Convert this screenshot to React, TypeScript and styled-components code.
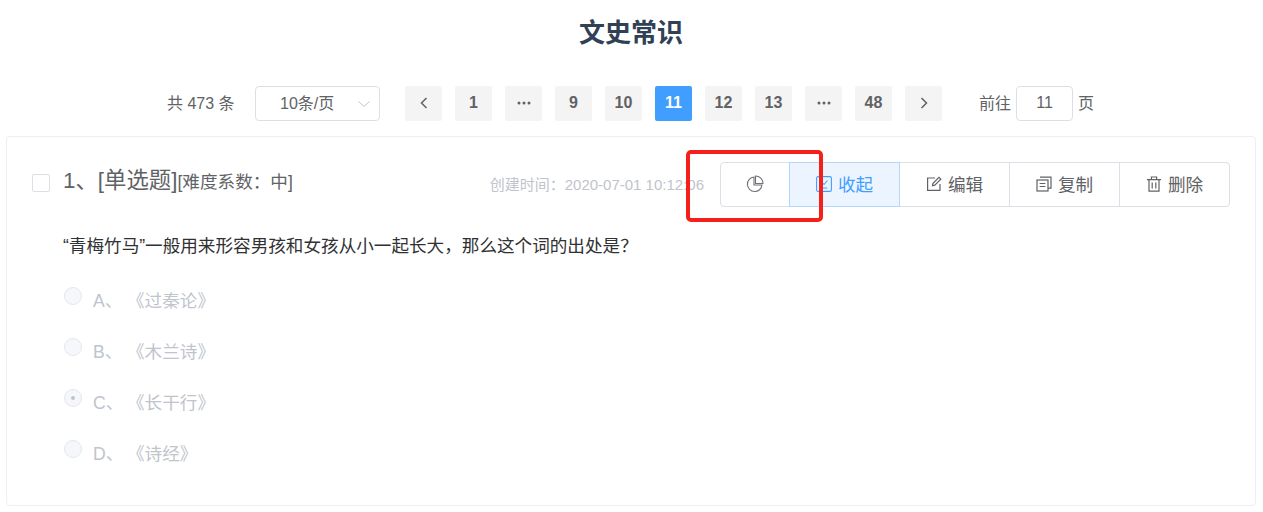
import React from "react";
import styled, { createGlobalStyle } from "styled-components";

const GlobalStyle = createGlobalStyle`
  html, body {
    margin: 0;
    padding: 0;
    background: #fff;
    font-family: "Liberation Sans", "Noto Sans CJK SC", sans-serif;
  }
  * {
    box-sizing: border-box;
  }
`;

const pages = ["1", "...", "9", "10", "11", "12", "13", "...", "48"];
const options = [
  { label: "A、", text: "《过秦论》", checked: false },
  { label: "B、", text: "《木兰诗》", checked: false },
  { label: "C、", text: "《长干行》", checked: true },
  { label: "D、", text: "《诗经》", checked: false },
];

const PieIcon = () => (
  <svg width="18" height="18" viewBox="0 0 18 18" fill="none" stroke="#707276" strokeWidth="1.1">
    <path d="M8 2a7.300 7.300 0 1 0 8 8H8z" />
    <path d="M9.500 1a7.500 7.500 0 0 1 7.500 7.500H9.500z" />
  </svg>
);

const FoldIcon = () => (
  <svg width="16" height="16" viewBox="0 0 16 16" fill="none" stroke="currentColor" strokeWidth="1.1">
    <rect x="0.6" y="0.6" width="14.800" height="14.800" rx="1.500" />
    <path d="M4.500 4.500l3.500 4 3.500-4M4.500 12h7" />
  </svg>
);

const EditIcon = () => (
  <svg width="16" height="16" viewBox="0 0 16 16" fill="none" stroke="currentColor" strokeWidth="1.2">
    <path d="M14 8v6.400H1.600V2H9" />
    <path d="M6.500 9.600l.5-2.400L13 1.400l1.800 1.800-6 5.900z" />
  </svg>
);

const CopyIcon = () => (
  <svg width="16" height="16" viewBox="0 0 16 16" fill="none" stroke="currentColor" strokeWidth="1.2">
    <rect x="1" y="4" width="11" height="11" />
    <path d="M4 1.200h11v11h-3M3.600 7.500h5.800M3.600 10.500h5.800" />
  </svg>
);

const TrashIcon = () => (
  <svg width="16" height="16" viewBox="0 0 16 16" fill="none" stroke="currentColor" strokeWidth="1.2">
    <path d="M1 3.600h14M3 3.600v11.600h10V3.600M5.400 3.600V1h5.200v2.600M6.200 6.400v6M9.800 6.400v6" />
  </svg>
);

const App = () => {
  return (
    <Page>
      <GlobalStyle />
      <Title>文史常识</Title>
      <Pagination>
        <Total>共 473 条</Total>
        <SizeSelect>
          <Raised>10条/页</Raised>
          <svg width="14" height="14" viewBox="0 0 14 14" fill="none" stroke="#c0c4cc" strokeWidth="1">
            <path d="M1.500 4.500L7 9.500l5.500-5" />
          </svg>
        </SizeSelect>
        <Pager>
          <PageButton>
            <svg width="14" height="14" viewBox="0 0 14 14" fill="none" stroke="#606266" strokeWidth="1.500">
              <path d="M9.500 2L4.500 7l5 5" />
            </svg>
          </PageButton>
          {pages.map((page, index) => (
            <PageButton key={index} $active={page === "11"}>
              {page === "..." ? (
                <svg width="14" height="4" viewBox="0 0 14 4" fill="#606266">
                  <circle cx="2" cy="2" r="1.500" />
                  <circle cx="7" cy="2" r="1.500" />
                  <circle cx="12" cy="2" r="1.500" />
                </svg>
              ) : (
                page
              )}
            </PageButton>
          ))}
          <PageButton>
            <svg width="14" height="14" viewBox="0 0 14 14" fill="none" stroke="#606266" strokeWidth="1.500">
              <path d="M4.500 2l5 5-5 5" />
            </svg>
          </PageButton>
        </Pager>
        <Jumper>
          <Raised>前往</Raised>
          <JumpInput>11</JumpInput>
          <Raised>页</Raised>
        </Jumper>
      </Pagination>
      <Card>
        <CardHeader>
          <Checkbox />
          <Heading>
            1、[单选题]<Difficulty>[难度系数：中]</Difficulty>
          </Heading>
          <CreatedAt>创建时间：2020-07-01 10:12:06</CreatedAt>
          <ActionGroup>
            <ActionButton $width={70}>
              <PieIcon />
            </ActionButton>
            <ActionButton $width={111} $active>
              <FoldIcon />
              收起
            </ActionButton>
            <ActionButton $width={111}>
              <EditIcon />
              编辑
            </ActionButton>
            <ActionButton $width={111}>
              <CopyIcon />
              复制
            </ActionButton>
            <ActionButton $width={111}>
              <TrashIcon />
              删除
            </ActionButton>
            <Highlight />
          </ActionGroup>
        </CardHeader>
        <Question>“青梅竹马”一般用来形容男孩和女孩从小一起长大，那么这个词的出处是？</Question>
        <OptionList>
          {options.map((option) => (
            <Option key={option.label}>
              <Radio $checked={option.checked} />
              <OptionLabel>{option.label}</OptionLabel>
              <OptionText>{option.text}</OptionText>
            </Option>
          ))}
        </OptionList>
      </Card>
    </Page>
  );
};

export default App;

const Page = styled.div`
  width: 1263px;
  height: 512px;
  padding: 0 7px 6px 6px;
  overflow: hidden;
`;

const Title = styled.h1`
  margin: 0;
  height: 86px;
  padding-top: 17px;
  color: #304156;
  font-size: 26px;
  line-height: 32px;
  font-weight: 700;
  text-align: center;
`;

const Pagination = styled.div`
  display: flex;
  align-items: center;
  height: 35px;
  margin-bottom: 15px;
  padding-left: 161px;
  color: #606266;
  font-size: 16px;
`;

const Raised = styled.span`
  margin-top: -3px;
`;

const Total = styled.span`
  width: 88px;
  margin-top: -3px;
  white-space: nowrap;
`;

const SizeSelect = styled.div`
  display: flex;
  align-items: center;
  justify-content: space-between;
  width: 125px;
  height: 35px;
  padding: 0 8px 0 24px;
  border: 1px solid #dcdfe6;
  border-radius: 4px;
`;

const Pager = styled.div`
  display: flex;
  gap: 13px;
  margin-left: 25px;
`;

const PageButton = styled.div<{ $active?: boolean }>`
  display: flex;
  align-items: center;
  justify-content: center;
  width: 37px;
  height: 35px;
  padding-bottom: 2px;
  border-radius: 2px;
  background: ${(p) => (p.$active ? "#409eff" : "#f4f4f5")};
  color: ${(p) => (p.$active ? "#fff" : "#606266")};
  font-size: 16px;
  font-weight: 700;
`;

const Jumper = styled.div`
  display: flex;
  align-items: center;
  gap: 5px;
  margin-left: 37px;
  white-space: nowrap;
`;

const JumpInput = styled.div`
  display: flex;
  align-items: center;
  justify-content: center;
  width: 57px;
  height: 35px;
  padding-bottom: 2px;
  border: 1px solid #dcdfe6;
  border-radius: 4px;
`;

const Card = styled.div`
  height: 370px;
  padding: 25px 25px 0 25px;
  border: 1px solid #ebeef5;
  border-radius: 4px;
`;

const CardHeader = styled.div`
  display: flex;
  align-items: center;
  height: 45px;
`;

const Checkbox = styled.span`
  width: 18px;
  height: 18px;
  margin-top: -4px;
  border: 1px solid #dcdfe6;
  border-radius: 2px;
`;

const Heading = styled.div`
  margin-left: 13px;
  margin-top: -14px;
  color: #606266;
  font-size: 22.400px;
  white-space: nowrap;
`;

const Difficulty = styled.span`
  font-size: 17.600px;
`;

const CreatedAt = styled.span`
  margin-left: auto;
  margin-right: 16px;
  margin-top: -2px;
  color: #c0c4cc;
  font-size: 15px;
  white-space: nowrap;
`;

const ActionGroup = styled.div`
  position: relative;
  display: flex;
  height: 45px;
`;

const ActionButton = styled.div<{ $width: number; $active?: boolean }>`
  display: flex;
  align-items: center;
  justify-content: center;
  gap: 6px;
  width: ${(p) => p.$width}px;
  margin-left: -1px;
  padding-bottom: 2px;
  border: 1px solid ${(p) => (p.$active ? "#b3d8ff" : "#dcdfe6")};
  background: ${(p) => (p.$active ? "#ecf5ff" : "#fff")};
  color: ${(p) => (p.$active ? "#409eff" : "#606266")};
  font-size: 17.600px;
  z-index: ${(p) => (p.$active ? 1 : 0)};

  &:first-child {
    margin-left: 0;
    border-radius: 4px 0 0 4px;
  }
  &:nth-last-child(2) {
    border-radius: 0 4px 4px 0;
  }
`;

const Highlight = styled.div`
  position: absolute;
  left: -34px;
  top: -12px;
  z-index: 2;
  width: 137px;
  height: 72px;
  border: 4px solid #f5201a;
  border-radius: 5px;
`;

const Question = styled.div`
  margin: 27px 0 0 31px;
  color: #303133;
  font-size: 17.600px;
  line-height: 24px;
`;

const OptionList = styled.div`
  display: flex;
  flex-direction: column;
  gap: 27px;
  margin: 29px 0 0 32px;
`;

const Option = styled.div`
  display: flex;
  align-items: center;
  height: 24px;
  color: #c0c4cc;
  font-size: 17.600px;
`;

const Radio = styled.span<{ $checked: boolean }>`
  position: relative;
  width: 18px;
  height: 18px;
  margin-top: -6px;
  border: 1px solid #e4e7ed;
  border-radius: 50%;
  background: #f5f7fa;

  &::after {
    content: "";
    display: ${(p) => (p.$checked ? "block" : "none")};
    position: absolute;
    left: 6px;
    top: 6px;
    width: 4px;
    height: 4px;
    border-radius: 50%;
    background: #c0c4cc;
  }
`;

const OptionLabel = styled.span`
  width: 34px;
  margin-left: 11px;
`;

const OptionText = styled.span`
  font-size: 17.600px;
`;
